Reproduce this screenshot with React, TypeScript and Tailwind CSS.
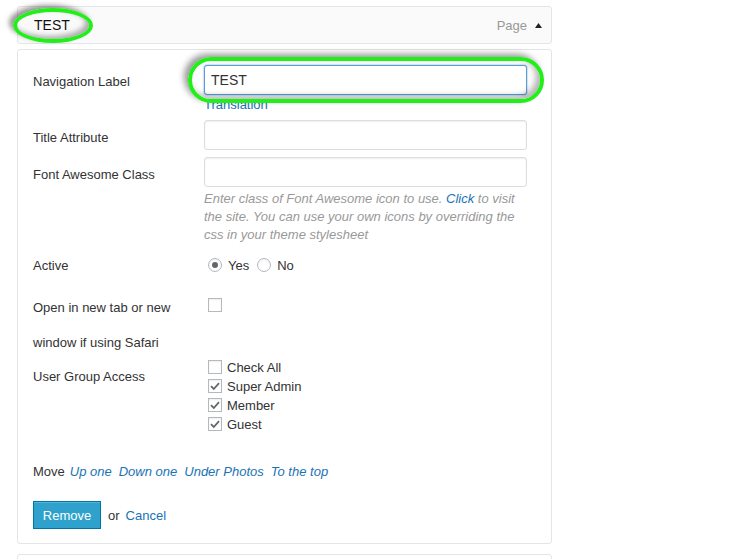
import React from "react";

const Check = () => (
  <svg width="12" height="12" viewBox="0 0 12 12" className="block">
    <path d="M2 6.2 L4.8 9 L10 3.2" fill="none" stroke="#666" strokeWidth="1.8" />
  </svg>
);

const Box = ({ checked }: { checked?: boolean }) => (
  <span className="flex h-[14px] w-[14px] items-center justify-center border border-[#b4b9be] bg-white shadow-[inset_0_1px_2px_rgba(0,0,0,0.07)]">
    {checked ? <Check /> : null}
  </span>
);

const Radio = ({ checked }: { checked?: boolean }) => (
  <span className="flex h-[14px] w-[14px] items-center justify-center rounded-full border border-[#b4b9be] bg-white shadow-[inset_0_1px_2px_rgba(0,0,0,0.07)]">
    {checked ? <span className="h-[6px] w-[6px] rounded-full bg-[#666]" /> : null}
  </span>
);

export default function App() {
  return (
    <div
      className="relative h-[559px] w-[742px] overflow-hidden bg-white text-[13px] text-[#333]"
      style={{ fontFamily: '"Liberation Sans", Arial, sans-serif' }}
    >
      {/* header */}
      <div className="ml-[17px] mt-[6px] flex h-[38px] w-[535px] items-center justify-between rounded-[3px] border border-[#e5e5e5] bg-[#fafafa] pl-[16px] pr-[9px]">
        <span className="pt-[1px] text-[14px] text-[#111]">TEST</span>
        <span className="flex items-center gap-[8px] pt-[1px] text-[13px] text-[#999]">
          Page
          <svg width="7" height="5" viewBox="0 0 7 5">
            <path d="M0 5 L3.5 0 L7 5 Z" fill="#222" />
          </svg>
        </span>
      </div>

      {/* panel */}
      <div className="ml-[17px] mt-[5px] h-[495px] w-[535px] rounded-[3px] border border-[#e5e5e5] bg-white pl-[15px] pt-[15px]">
        {/* Navigation label */}
        <div className="flex">
          <div className="h-[30px] w-[171px] leading-[34px]">Navigation Label</div>
          <div>
            <div className="flex h-[30px] w-[323px] items-center rounded-[3px] border border-[#5b9dd9] bg-white px-[6px] pt-[1px] text-[14px] text-[#333] shadow-[0_0_2px_rgba(30,140,190,0.8)]">
              TEST
            </div>
            <div className="leading-[20px] text-[#1a73b5]">Translation</div>
          </div>
        </div>

        {/* Title attribute */}
        <div className="mt-[5px] flex">
          <div className="h-[30px] w-[171px] leading-[36px]">Title Attribute</div>
          <div className="h-[30px] w-[323px] rounded-[3px] border border-[#ddd] bg-white shadow-[inset_0_1px_2px_rgba(0,0,0,0.07)]" />
        </div>

        {/* Font awesome */}
        <div className="mt-[7px] flex">
          <div className="h-[30px] w-[171px] leading-[36px]">Font Awesome Class</div>
          <div>
            <div className="h-[30px] w-[323px] rounded-[3px] border border-[#ddd] bg-white shadow-[inset_0_1px_2px_rgba(0,0,0,0.07)]" />
            <div className="mt-[3px] whitespace-nowrap italic leading-[18px] text-[#999]">
              Enter class of Font Awesome icon to use. <span className="text-[#1a73b5]">Click</span> to visit
              <br />
              the site. You can use your own icons by overriding the
              <br />
              css in your theme stylesheet
            </div>
          </div>
        </div>

        {/* Active */}
        <div className="mt-[11px] flex h-[20px] items-center">
          <div className="w-[171px] pt-[2px]">Active</div>
          <div className="flex items-center pl-[4px]">
            <Radio checked />
            <span className="ml-[6px] pt-[2px]">Yes</span>
            <span className="ml-[8px]">
              <Radio />
            </span>
            <span className="ml-[6px] pt-[2px]">No</span>
          </div>
        </div>

        {/* New tab */}
        <div className="mt-[14px] flex">
          <div className="h-[68px] w-[171px] pt-[1px] leading-[35px]">
            Open in new tab or new
            <br />
            window if using Safari
          </div>
          <div className="pl-[4px] pt-[9px]">
            <Box />
          </div>
        </div>

        {/* User group */}
        <div className="flex">
          <div className="mt-[10px] w-[171px] leading-[19px]">User Group Access</div>
          <div className="pl-[4px]">
            {[
              ["Check All", false],
              ["Super Admin", true],
              ["Member", true],
              ["Guest", true],
            ].map(([label, c]) => (
              <div key={label as string} className="flex h-[19px] items-center">
                <Box checked={c as boolean} />
                <span className="ml-[5px] pt-[2px]">{label as string}</span>
              </div>
            ))}
          </div>
        </div>

        {/* Move */}
        <div className="mt-[28px] flex h-[20px] items-center pt-[2px]">
          <span>Move</span>
          <span className="ml-[5px] italic text-[#1a73b5]">Up one</span>
          <span className="ml-[7px] italic text-[#1a73b5]">Down one</span>
          <span className="ml-[7px] italic text-[#1a73b5]">Under Photos</span>
          <span className="ml-[7px] italic text-[#1a73b5]">To the top</span>
        </div>

        {/* Buttons */}
        <div className="mt-[20px] flex items-center">
          <div className="flex h-[28px] w-[68px] items-center justify-center border border-[#0074a2] bg-[#2ea2cc] pt-[1px] text-[13px] text-white shadow-[inset_0_1px_0_rgba(120,200,230,0.5)]">
            Remove
          </div>
          <span className="ml-[7px] pt-[1px]">or</span>
          <span className="ml-[6px] pt-[1px] text-[#1a73b5]">Cancel</span>
        </div>
      </div>

      {/* next panel */}
      <div className="ml-[17px] mt-[10px] h-[30px] w-[535px] rounded-[3px] border border-[#e5e5e5] bg-white" />

      {/* annotation ellipses */}
      <div className="pointer-events-none absolute left-[13px] top-[8px] h-[35px] w-[80px] rounded-[50%] border-[4px] border-[#22ee1a] shadow-[-4px_-3px_5px_rgba(0,0,0,0.4),inset_-4px_-3px_5px_rgba(0,0,0,0.3)]" />
      <div className="pointer-events-none absolute left-[188px] top-[57px] h-[46px] w-[356px] rounded-full border-[4px] border-[#22ee1a] shadow-[-4px_-3px_6px_rgba(0,0,0,0.4),inset_-4px_-3px_6px_rgba(0,0,0,0.3)]" />
    </div>
  );
}
